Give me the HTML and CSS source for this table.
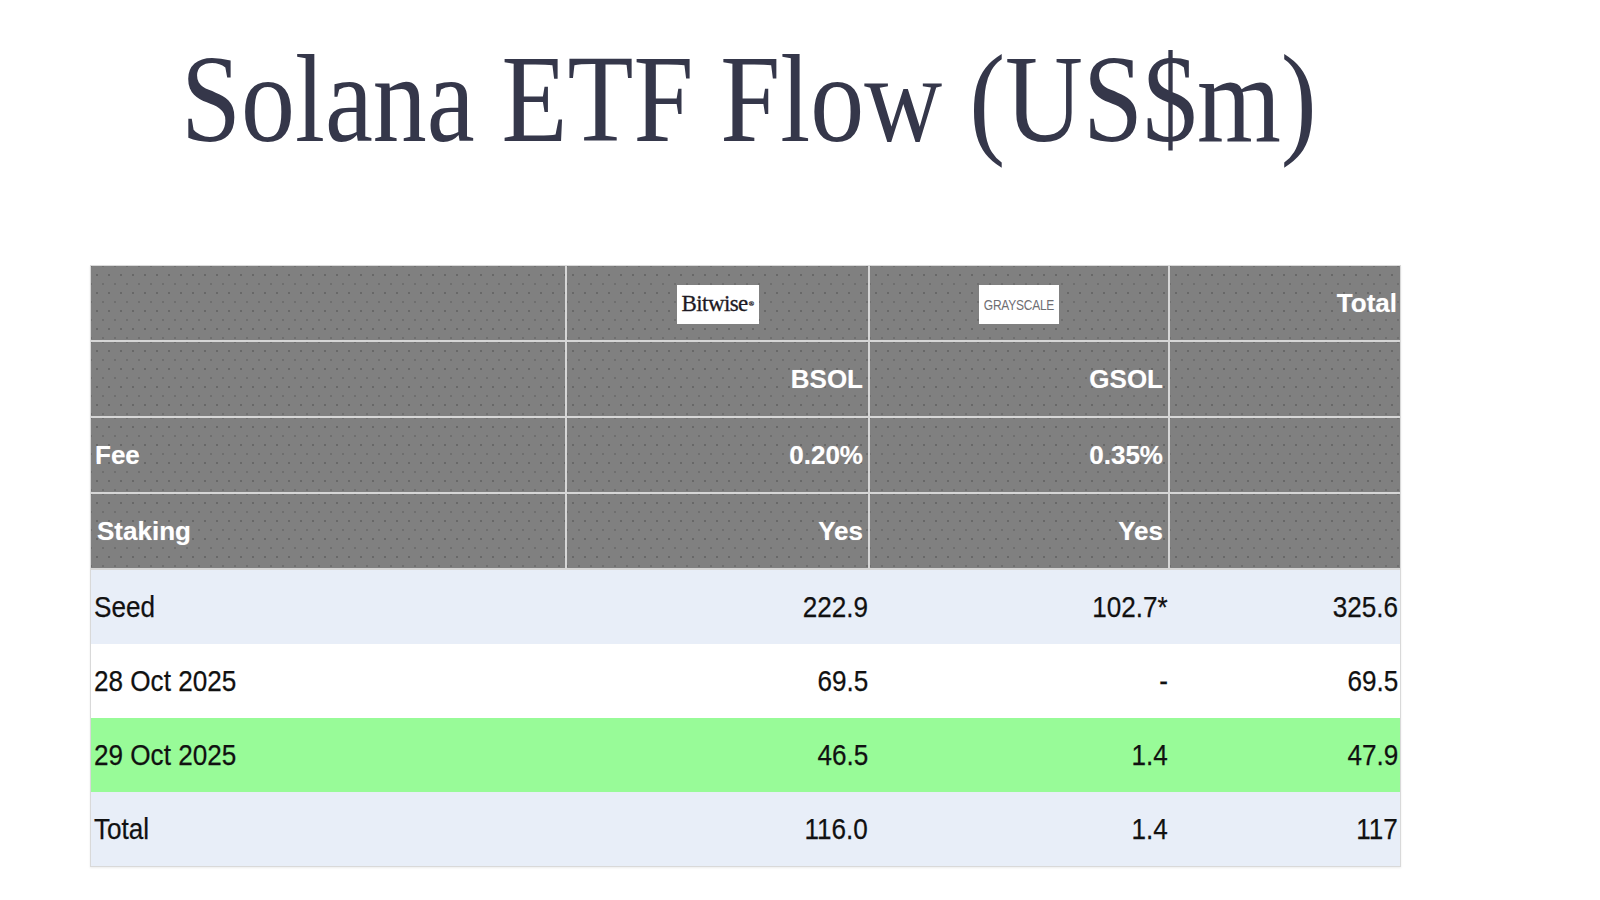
FILE: index.html
```html
<!DOCTYPE html>
<html lang="en">
<head>
<meta charset="utf-8">
<title>Solana ETF Flow (US$m)</title>
<link rel="stylesheet" href="styles.css">
</head>
<body>
<main class="slide">
  <h1 class="title">Solana ETF Flow (US$m)</h1>
  <table class="flow">
    <colgroup>
      <col class="c-label">
      <col class="c-bsol">
      <col class="c-gsol">
      <col class="c-total">
    </colgroup>
    <thead>
      <tr>
        <th class="h-left"></th>
        <th class="h-logo"><span class="logo logo-bitwise">Bitwise<sup>®</sup></span></th>
        <th class="h-logo"><span class="logo logo-gray"><span class="gray-word">GRAYSCALE</span></span></th>
        <th class="h-last"><span class="ht">Total</span></th>
      </tr>
      <tr>
        <th class="h-left"></th>
        <th><span class="ht">BSOL</span></th>
        <th><span class="ht">GSOL</span></th>
        <th class="h-last"></th>
      </tr>
      <tr>
        <th class="h-left"><span class="ht">Fee</span></th>
        <th><span class="ht">0.20%</span></th>
        <th><span class="ht">0.35%</span></th>
        <th class="h-last"></th>
      </tr>
      <tr>
        <th class="h-left"><span class="ht ht-staking">Staking</span></th>
        <th><span class="ht">Yes</span></th>
        <th><span class="ht">Yes</span></th>
        <th class="h-last"></th>
      </tr>
    </thead>
    <tbody>
      <tr class="r-blue">
        <td class="b-left"><span class="bt">Seed</span></td>
        <td><span class="bt">222.9</span></td>
        <td><span class="bt">102.7*</span></td>
        <td><span class="bt">325.6</span></td>
      </tr>
      <tr class="r-white">
        <td class="b-left"><span class="bt">28 Oct 2025</span></td>
        <td><span class="bt">69.5</span></td>
        <td><span class="bt">-</span></td>
        <td><span class="bt">69.5</span></td>
      </tr>
      <tr class="r-green">
        <td class="b-left"><span class="bt">29 Oct 2025</span></td>
        <td><span class="bt">46.5</span></td>
        <td><span class="bt">1.4</span></td>
        <td><span class="bt">47.9</span></td>
      </tr>
      <tr class="r-blue">
        <td class="b-left"><span class="bt">Total</span></td>
        <td><span class="bt">116.0</span></td>
        <td><span class="bt">1.4</span></td>
        <td><span class="bt">117</span></td>
      </tr>
    </tbody>
  </table>
</main>
</body>
</html>
```
FILE: styles.css
```css
html, body {
  margin: 0;
  padding: 0;
  background: #ffffff;
}

.slide {
  width: 1600px;
  height: 900px;
  padding-top: 38px;
  padding-left: 90px;
  box-sizing: border-box;
  overflow: hidden;
}

.title {
  margin: 0 0 103px 91px;
  font-family: "Liberation Serif", "Times New Roman", serif;
  font-weight: 400;
  font-size: 124px;
  line-height: 124px;
  color: #35374a;
  white-space: nowrap;
  transform: scaleX(0.87);
  transform-origin: left center;
}

.flow {
  width: 1311px;
  table-layout: fixed;
  border-collapse: separate;
  border-spacing: 0;
  border: 1px solid #d9d9d9;
  box-shadow: 0 1px 2px rgba(0, 0, 0, 0.08);
  font-family: "Liberation Sans", Arial, sans-serif;
}

.c-label { width: 476px; }
.c-bsol { width: 303px; }
.c-gsol { width: 300px; }
.c-total { width: auto; }

.flow th {
  height: 76px;
  padding: 0 5px;
  box-sizing: border-box;
  background-color: #808080;
  background-image:
    radial-gradient(circle, rgba(60, 60, 60, 0.35) 0.8px, transparent 1.3px),
    radial-gradient(circle, rgba(60, 60, 60, 0.25) 0.8px, transparent 1.3px);
  background-size: 12px 18px, 12px 18px;
  background-position: 0 0, 6px 9px;
  border-right: 2px solid #d6d6d6;
  border-bottom: 2px solid #d6d6d6;
  text-align: right;
  vertical-align: middle;
  color: #ffffff;
  font-weight: 700;
  font-size: 26px;
}

.flow th.h-left {
  text-align: left;
  padding-left: 4px;
}

.flow th.h-last {
  border-right: 0;
  padding-right: 3px;
}

.flow th.h-logo {
  text-align: center;
  padding: 0;
}

.ht {
  display: inline-block;
  text-shadow: 0 0 1px rgba(255, 255, 255, 0.4);
}

.ht-staking {
  margin-left: 2px;
}

.logo {
  display: inline-flex;
  align-items: center;
  justify-content: center;
  box-sizing: border-box;
  height: 39px;
  background: #ffffff;
  vertical-align: middle;
  margin-top: 2px;
}

.logo-bitwise {
  width: 82px;
  font-family: "Liberation Serif", "Times New Roman", serif;
  font-weight: 400;
  font-size: 23px;
  color: #1e1a24;
  letter-spacing: -0.6px;
  -webkit-text-stroke: 0.3px #1e1a24;
}

.logo-bitwise sup {
  font-size: 7px;
  vertical-align: 10px;
  margin-left: 1px;
}

.logo-gray {
  width: 80px;
  overflow: hidden;
}

.gray-word {
  display: inline-block;
  font-family: "Liberation Sans", Arial, sans-serif;
  font-weight: 400;
  font-size: 15px;
  color: #6e6e72;
  letter-spacing: -0.3px;
  transform: scaleX(0.8);
}

.flow td {
  height: 74px;
  padding: 0 2px;
  box-sizing: border-box;
  text-align: right;
  vertical-align: middle;
  font-size: 30px;
  color: #111111;
  -webkit-text-stroke: 0.25px #111111;
}

.flow td.b-left {
  text-align: left;
  padding-left: 3px;
}

.bt {
  display: inline-block;
  transform: scaleX(0.87);
  transform-origin: right center;
}

.b-left .bt {
  transform-origin: left center;
}

.r-blue td { background: #e8eef8; }
.r-white td { background: #ffffff; }
.r-green td { background: #98fb98; }
```
